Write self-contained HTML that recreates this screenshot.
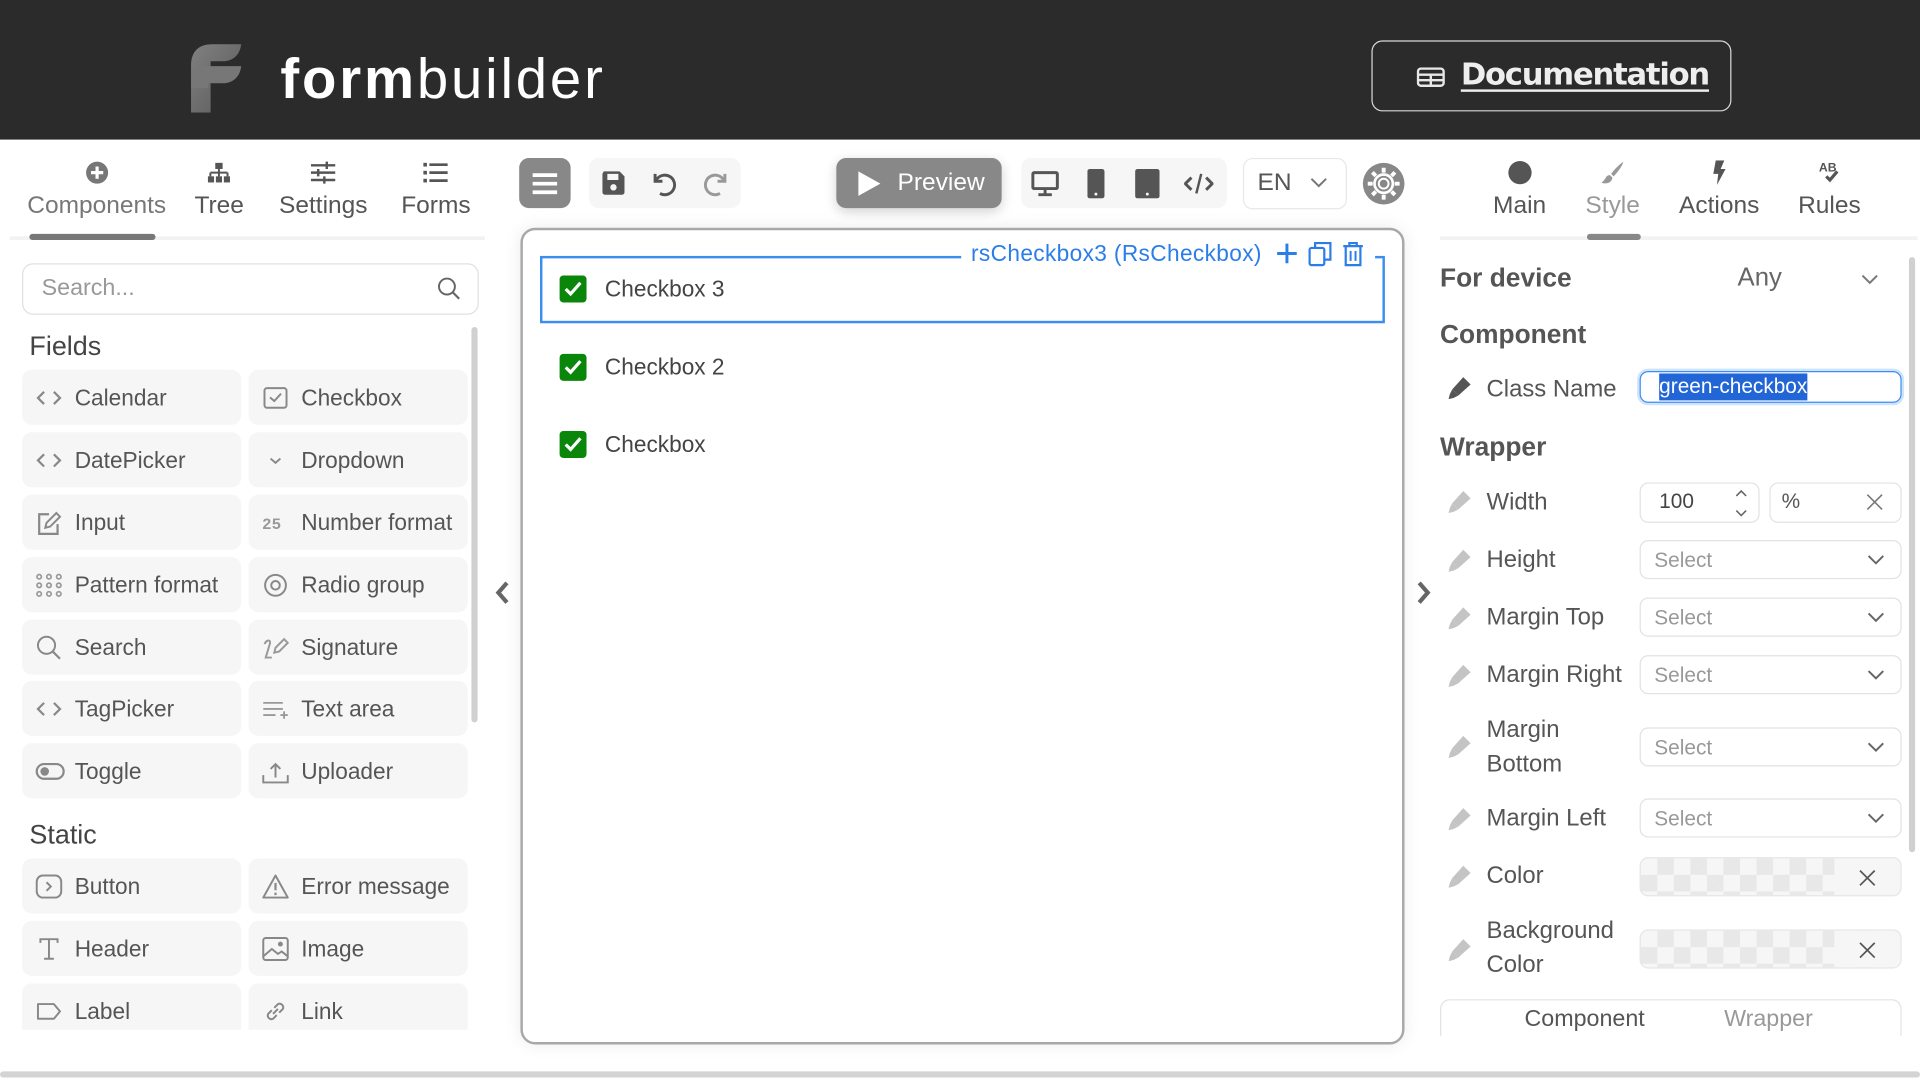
<!DOCTYPE html>
<html><head><meta charset="utf-8">
<style>
*{box-sizing:border-box;margin:0;padding:0}
html,body{width:1920px;height:1080px;overflow:hidden;background:#fff;font-family:"Liberation Sans",sans-serif}
#w{position:absolute;left:0;top:0;width:1568px;height:882px;transform:scale(1.22449);transform-origin:0 0;color:#555}
.a{position:absolute}
.hdr{left:0;top:0;width:1568px;height:114px;background:#2b2b2b}
.t{position:absolute;white-space:nowrap}
.tab{position:absolute;top:131px;text-align:center;font-size:20px;color:#555;transform:translateX(-50%)}
.tab svg{display:block;margin:0 auto 6px}
.item{position:absolute;width:179px;height:45px;background:#f6f6f6;border-radius:8px;font-size:18.5px;color:#555}
.item span{position:absolute;left:43px;top:12px}
.item svg{position:absolute;left:11px;top:12px}
.grp{position:absolute;background:#f6f6f6;border-radius:8px}
.lbl{position:absolute;left:1214px;font-size:19.5px;color:#555;line-height:28px}
.pen{position:absolute;left:1182px}
.sel{position:absolute;left:1339px;width:214px;height:32px;border:1px solid #e2e2e2;border-radius:7px;font-size:17px;color:#999}
.sel span{position:absolute;left:11px;top:6px}
.sel svg{position:absolute;right:12px;top:10px}
.chk{position:absolute;left:457px;width:22px;height:22px;background:#0a870a;border-radius:3px}
.chk svg{position:absolute;left:3px;top:4px}
.ct{position:absolute;left:494px;font-size:18.5px;color:#444}
.checker{position:absolute;left:1339px;width:214px;height:32px;border:1px solid #e6e6e6;border-radius:7px;background-color:#f6f6f6;background-image:linear-gradient(45deg,#e8e8e8 25%,transparent 25%,transparent 75%,#e8e8e8 75%),linear-gradient(45deg,#e8e8e8 25%,transparent 25%,transparent 75%,#e8e8e8 75%);background-size:27px 27px;background-position:0 0,13.5px 13.5px;overflow:hidden}
.checker i{position:absolute;right:0;top:0;width:54px;height:100%;background:#f6f6f6}
.checker svg{position:absolute;right:20px;top:9px}
</style></head><body><div id="w">
<div class="a hdr"></div>
<svg class="a" style="left:156px;top:36px" width="42" height="56" viewBox="0 0 42 56">
<defs><linearGradient id="g" x1="0" y1="0" x2="1" y2="1"><stop offset="0" stop-color="#808080"/><stop offset="1" stop-color="#5a5a5a"/></linearGradient></defs>
<path d="M0 56V18C0 6 6 0 18 0H41C40 9 34 14 26 14H16V56Z" fill="url(#g)"/>
<path d="M0 36V30C0 22 5 18 13 18H41C40 27 34 32 26 32H14V36Z" fill="#777"/>
</svg>
<div class="t" style="left:229px;top:37px;font-size:46px;color:#fff;letter-spacing:2.3px"><b>form</b>builder</div>
<div class="a" style="left:1120px;top:33px;width:294px;height:58px;border:1px solid #d8d8d8;border-radius:9px"></div>
<svg class="a" style="left:1157px;top:55px" width="23" height="16" viewBox="0 0 23 16"><rect x="1" y="1" width="21" height="14" rx="2.5" fill="none" stroke="#e8e8e8" stroke-width="2"/><path d="M1 6H22M1 10.5H22M11.5 6V15" stroke="#e8e8e8" stroke-width="2"/></svg>
<div class="t" style="left:1193px;top:46px;font-size:25px;font-weight:bold;color:#eee;text-decoration:underline;text-underline-offset:4px;font-family:'DejaVu Sans','Liberation Sans',sans-serif;letter-spacing:-1px">Documentation</div>

<!-- left tabs -->
<div class="tab" style="left:79px;color:#777"><svg width="20" height="20" viewBox="0 0 20 20"><circle cx="10" cy="10" r="9" fill="#777"/><path d="M10 5V15M5 10H15" stroke="#fff" stroke-width="2.6"/></svg>Components</div>
<div class="tab" style="left:179px"><svg width="20" height="20" viewBox="0 0 20 20"><rect x="7" y="2" width="6" height="5" fill="#555"/><path d="M10 7V10M3 10H17M3 10V13M10 10V13M17 10V13" stroke="#555" stroke-width="1.6" fill="none"/><rect x="1" y="13" width="5" height="5" fill="#555"/><rect x="7.5" y="13" width="5" height="5" fill="#555"/><rect x="14" y="13" width="5" height="5" fill="#555"/></svg>Tree</div>
<div class="tab" style="left:264px"><svg width="20" height="20" viewBox="0 0 20 20"><path d="M0 4H20M0 10H20M0 16H20" stroke="#555" stroke-width="2"/><path d="M13 1V7M6 7V13M11 13V19" stroke="#555" stroke-width="2"/></svg>Settings</div>
<div class="tab" style="left:356px"><svg width="20" height="20" viewBox="0 0 20 20"><rect x="0" y="2" width="3" height="3" fill="#555"/><rect x="0" y="8.5" width="3" height="3" fill="#555"/><rect x="0" y="15" width="3" height="3" fill="#555"/><path d="M5 3.5H20M5 10H20M5 16.5H20" stroke="#555" stroke-width="2.2"/></svg>Forms</div>
<div class="a" style="left:8px;top:193px;width:388px;height:3px;background:#f2f2f2"></div>
<div class="a" style="left:24px;top:191px;width:103px;height:5px;background:#777;border-radius:3px"></div>
<div class="a" style="left:18px;top:215px;width:373px;height:42px;border:1px solid #e0e0e0;border-radius:9px"></div>
<div class="t" style="left:34px;top:225px;font-size:19px;color:#999">Search...</div>
<svg class="a" style="left:357px;top:226px" width="20" height="20" viewBox="0 0 20 20"><circle cx="8" cy="8" r="6.5" fill="none" stroke="#666" stroke-width="1.6"/><path d="M12.8 12.8L18 18" stroke="#666" stroke-width="1.8"/></svg>
<div class="t" style="left:24px;top:270px;font-size:22px;color:#444">Fields</div>
<div class="a" style="left:385px;top:267px;width:5px;height:323px;background:#d0d0d0;border-radius:3px"></div>

<div class="item" style="left:18px;top:302px"><svg width="22" height="22" viewBox="0 0 22 22"><path d="M7 6L2 11L7 16M15 6L20 11L15 16" fill="none" stroke="#888" stroke-width="1.8"/></svg><span>Calendar</span></div>
<div class="item" style="left:203px;top:302px"><svg width="22" height="22" viewBox="0 0 22 22"><rect x="2" y="3" width="18" height="16" rx="2" fill="none" stroke="#888" stroke-width="1.6"/><path d="M6.5 10.5L10 13.5L15.5 7.5" fill="none" stroke="#888" stroke-width="1.6"/></svg><span>Checkbox</span></div>
<div class="item" style="left:18px;top:353px"><svg width="22" height="22" viewBox="0 0 22 22"><path d="M7 6L2 11L7 16M15 6L20 11L15 16" fill="none" stroke="#888" stroke-width="1.8"/></svg><span>DatePicker</span></div>
<div class="item" style="left:203px;top:353px"><svg width="22" height="22" viewBox="0 0 22 22"><path d="M7 9.5L11 13L15 9.5" fill="none" stroke="#888" stroke-width="1.6"/></svg><span>Dropdown</span></div>
<div class="item" style="left:18px;top:404px"><svg width="22" height="22" viewBox="0 0 22 22"><path d="M11 4H3V20H18V12" fill="none" stroke="#888" stroke-width="1.8"/><path d="M8 15L9 11L17 3L20 6L12 14Z" fill="none" stroke="#888" stroke-width="1.6"/></svg><span>Input</span></div>
<div class="item" style="left:203px;top:404px"><svg width="22" height="22" viewBox="0 0 22 22"><text x="0" y="16" font-size="13" font-weight="bold" fill="#999" font-family="Liberation Mono,monospace">25</text></svg><span>Number format</span></div>
<div class="item" style="left:18px;top:455px"><svg width="22" height="22" viewBox="0 0 22 22"><g fill="none" stroke="#999" stroke-width="1.4"><circle cx="3" cy="4" r="1.8"/><circle cx="11" cy="4" r="1.8"/><circle cx="19" cy="4" r="1.8"/><circle cx="3" cy="11" r="1.8"/><circle cx="11" cy="11" r="1.8"/><circle cx="19" cy="11" r="1.8"/><circle cx="3" cy="18" r="1.8"/><circle cx="11" cy="18" r="1.8"/><circle cx="19" cy="18" r="1.8"/></g></svg><span>Pattern format</span></div>
<div class="item" style="left:203px;top:455px"><svg width="22" height="22" viewBox="0 0 22 22"><circle cx="11" cy="11" r="8.5" fill="none" stroke="#888" stroke-width="1.6"/><circle cx="11" cy="11" r="3.5" fill="none" stroke="#888" stroke-width="1.6"/></svg><span>Radio group</span></div>
<div class="item" style="left:18px;top:506px"><svg width="22" height="22" viewBox="0 0 22 22"><circle cx="9" cy="9" r="7" fill="none" stroke="#888" stroke-width="1.6"/><path d="M14 14L20 20" stroke="#888" stroke-width="1.8"/></svg><span>Search</span></div>
<div class="item" style="left:203px;top:506px"><svg width="22" height="22" viewBox="0 0 22 22"><path d="M2 8C4 4 8 4 6 9L3 19H8M10 15L11 11L18 4L21 7L14 14Z" fill="none" stroke="#999" stroke-width="1.6"/></svg><span>Signature</span></div>
<div class="item" style="left:18px;top:556px"><svg width="22" height="22" viewBox="0 0 22 22"><path d="M7 6L2 11L7 16M15 6L20 11L15 16" fill="none" stroke="#888" stroke-width="1.8"/></svg><span>TagPicker</span></div>
<div class="item" style="left:203px;top:556px"><svg width="22" height="22" viewBox="0 0 22 22"><path d="M1 6H17M1 11H17M1 16H11M15 16H21M18 13V19" stroke="#999" stroke-width="1.5"/></svg><span>Text area</span></div>
<div class="item" style="left:18px;top:607px"><svg width="24" height="22" viewBox="0 0 24 22"><rect x="1" y="5" width="22" height="12" rx="6" fill="none" stroke="#888" stroke-width="1.8"/><circle cx="7.5" cy="11" r="3.5" fill="#888"/></svg><span>Toggle</span></div>
<div class="item" style="left:203px;top:607px"><svg width="22" height="22" viewBox="0 0 22 22"><path d="M1 14V20H21V14M11 16V5M7 9L11 5L15 9" fill="none" stroke="#888" stroke-width="1.6"/></svg><span>Uploader</span></div>

<div class="t" style="left:24px;top:669px;font-size:22px;color:#444">Static</div>
<div class="item" style="left:18px;top:701px"><svg width="22" height="22" viewBox="0 0 22 22"><rect x="1" y="2" width="20" height="18" rx="5" fill="none" stroke="#888" stroke-width="1.6"/><path d="M9 7.5L12.5 11L9 14.5" fill="none" stroke="#888" stroke-width="1.6"/></svg><span>Button</span></div>
<div class="item" style="left:203px;top:701px"><svg width="22" height="22" viewBox="0 0 22 22"><path d="M11 2L21 20H1Z" fill="none" stroke="#888" stroke-width="1.6" stroke-linejoin="round"/><path d="M11 8V14M11 16V18" stroke="#888" stroke-width="1.8"/></svg><span>Error message</span></div>
<div class="item" style="left:18px;top:752px"><svg width="22" height="22" viewBox="0 0 22 22"><path d="M4 6V3H18V6M11 3V19M7 19H15" fill="none" stroke="#888" stroke-width="1.6"/></svg><span>Header</span></div>
<div class="item" style="left:203px;top:752px"><svg width="22" height="22" viewBox="0 0 22 22"><rect x="1" y="2" width="20" height="18" rx="2" fill="none" stroke="#888" stroke-width="1.6"/><path d="M1 17L8 11L13 15L16 13L21 17" fill="none" stroke="#888" stroke-width="1.6"/><circle cx="15" cy="7" r="2" fill="#888"/></svg><span>Image</span></div>
<div class="a" style="left:0;top:803px;width:400px;height:38px;overflow:hidden">
<div class="item" style="left:18px;top:0"><svg width="22" height="22" viewBox="0 0 22 22"><path d="M2 5H15L20 11L15 17H2Z" fill="none" stroke="#888" stroke-width="1.6" stroke-linejoin="round"/></svg><span>Label</span></div>
<div class="item" style="left:203px;top:0"><svg width="22" height="22" viewBox="0 0 22 22"><path d="M9 13L13 9M8 10L5 13A3 3 0 0 0 9 17L12 14M10 8L13 5A3 3 0 0 1 17 9L14 12" fill="none" stroke="#888" stroke-width="1.6"/></svg><span>Link</span></div>
</div>

<!-- toolbar -->
<div class="grp" style="left:424px;top:129px;width:42px;height:41px;background:#888"></div>
<svg class="a" style="left:434px;top:140px" width="22" height="20" viewBox="0 0 22 20"><path d="M1 3H21M1 10H21M1 17H21" stroke="#fff" stroke-width="3"/></svg>
<div class="grp" style="left:481px;top:129px;width:124px;height:41px"></div>
<svg class="a" style="left:491px;top:139px" width="20" height="21" viewBox="0 0 20 21"><path d="M2 1H15L19 5V18A2 2 0 0 1 17 20H3A2 2 0 0 1 1 18V3Z" fill="#555"/><rect x="5" y="3" width="9" height="5" fill="#f6f6f6"/><circle cx="10" cy="14" r="2.6" fill="#f6f6f6"/></svg>
<svg class="a" style="left:530px;top:138px" width="24" height="24" viewBox="0 0 24 24"><path d="M5 4V10H11" fill="none" stroke="#555" stroke-width="2.4"/><path d="M5.5 10A8 8 0 1 1 9 20" fill="none" stroke="#555" stroke-width="2.4"/></svg>
<svg class="a" style="left:573px;top:138px" width="24" height="24" viewBox="0 0 24 24"><path d="M19 4V10H13" fill="none" stroke="#999" stroke-width="2.4"/><path d="M18.5 10A8 8 0 1 0 15 20" fill="none" stroke="#999" stroke-width="2.4"/></svg>
<div class="grp" style="left:683px;top:129px;width:135px;height:41px;background:#888;box-shadow:0 3px 10px rgba(0,0,0,.18)"></div>
<svg class="a" style="left:700px;top:139px" width="20" height="22" viewBox="0 0 20 22"><path d="M1 1L19 11L1 21Z" fill="#fff"/></svg>
<div class="t" style="left:733px;top:138px;font-size:20px;color:#fff">Preview</div>
<div class="grp" style="left:834px;top:129px;width:168px;height:41px"></div>
<svg class="a" style="left:842px;top:139px" width="23" height="22" viewBox="0 0 23 22"><rect x="1.5" y="2" width="20" height="13" rx="1" fill="none" stroke="#555" stroke-width="2.4"/><path d="M11.5 15V19M6 20H17" stroke="#555" stroke-width="2.4"/></svg>
<svg class="a" style="left:888px;top:138px" width="14" height="24" viewBox="0 0 14 24"><rect x="0" y="0" width="14" height="24" rx="2" fill="#555"/><circle cx="7" cy="20.5" r="1.2" fill="#f6f6f6"/></svg>
<svg class="a" style="left:927px;top:138px" width="20" height="24" viewBox="0 0 20 24"><rect x="0" y="0" width="20" height="24" rx="2" fill="#555"/><circle cx="10" cy="20.5" r="1.2" fill="#f6f6f6"/></svg>
<svg class="a" style="left:967px;top:140px" width="24" height="20" viewBox="0 0 24 20"><path d="M6 5L1 10L6 15M18 5L23 10L18 15" fill="none" stroke="#555" stroke-width="2.4"/><path d="M14 2L10 18" stroke="#555" stroke-width="2"/></svg>
<div class="a" style="left:1015px;top:129px;width:85px;height:42px;border:1px solid #e8e8e8;border-radius:8px"></div>
<div class="t" style="left:1027px;top:138px;font-size:20px;color:#555">EN</div>
<svg class="a" style="left:1069px;top:144px" width="16" height="10" viewBox="0 0 16 10"><path d="M2 2L8 8L14 2" fill="none" stroke="#777" stroke-width="1.6"/></svg>
<svg class="a" style="left:1112px;top:132px" width="36" height="36" viewBox="0 0 36 36"><circle cx="18" cy="18" r="17" fill="#888"/><g transform="translate(18 18)"><circle r="7.5" fill="none" stroke="#fff" stroke-width="2.2"/><g stroke="#fff" stroke-width="3.2"><path d="M0 -13V-9M0 13V9M-13 0H-9M13 0H9M-9.2 -9.2L-6.4 -6.4M9.2 9.2L6.4 6.4M-9.2 9.2L-6.4 6.4M9.2 -9.2L6.4 -6.4"/></g><circle r="4" fill="none" stroke="#fff" stroke-width="1.6"/></g></svg>

<!-- canvas -->
<div class="a" style="left:425px;top:186px;width:722px;height:667px;border:2px solid #a8a8a8;border-radius:12px;box-shadow:0 0 14px rgba(0,0,0,.08)"></div>
<div class="a" style="left:441px;top:209px;width:690px;height:55px;border:2px solid #3a8ef0"></div>
<div class="a" style="left:785px;top:195px;width:338px;height:24px;background:#fff"></div>
<div class="t" style="left:793px;top:196px;font-size:18.5px;color:#2b7de8;letter-spacing:0.3px">rsCheckbox3 (RsCheckbox)</div>
<svg class="a" style="left:1042px;top:198px" width="18" height="18" viewBox="0 0 18 18"><path d="M9 1V17M1 9H17" stroke="#2b7de8" stroke-width="2.4"/></svg>
<svg class="a" style="left:1068px;top:197px" width="20" height="21" viewBox="0 0 20 21"><rect x="1.5" y="5.5" width="12" height="14" rx="1.5" fill="none" stroke="#2b7de8" stroke-width="1.8"/><path d="M6 5V1.5H18.5V15H14" fill="none" stroke="#2b7de8" stroke-width="1.8"/></svg>
<svg class="a" style="left:1096px;top:197px" width="18" height="21" viewBox="0 0 18 21"><path d="M1 4H17M6 4V1.5H12V4" fill="none" stroke="#2b7de8" stroke-width="1.8"/><path d="M3 4V19.5H15V4" fill="none" stroke="#2b7de8" stroke-width="1.8"/><path d="M7 8V16M11 8V16" stroke="#2b7de8" stroke-width="1.6"/></svg>
<div class="chk" style="top:225px"><svg width="16" height="14" viewBox="0 0 16 14"><path d="M2 7L6 11L14 2" fill="none" stroke="#fff" stroke-width="2.6"/></svg></div>
<div class="ct" style="top:225px">Checkbox 3</div>
<div class="chk" style="top:289px"><svg width="16" height="14" viewBox="0 0 16 14"><path d="M2 7L6 11L14 2" fill="none" stroke="#fff" stroke-width="2.6"/></svg></div>
<div class="ct" style="top:289px">Checkbox 2</div>
<div class="chk" style="top:352px"><svg width="16" height="14" viewBox="0 0 16 14"><path d="M2 7L6 11L14 2" fill="none" stroke="#fff" stroke-width="2.6"/></svg></div>
<div class="ct" style="top:352px">Checkbox</div>
<svg class="a" style="left:403px;top:474px" width="14" height="20" viewBox="0 0 14 20"><path d="M11 2L4 10L11 18" fill="none" stroke="#666" stroke-width="3.4"/></svg>
<svg class="a" style="left:1156px;top:474px" width="14" height="20" viewBox="0 0 14 20"><path d="M3 2L10 10L3 18" fill="none" stroke="#666" stroke-width="3.4"/></svg>

<!-- right tabs -->
<div class="tab" style="left:1241px"><svg width="20" height="20" viewBox="0 0 20 20"><circle cx="10" cy="10" r="9.5" fill="#555"/></svg>Main</div>
<div class="tab" style="left:1317px;color:#999"><svg width="20" height="20" viewBox="0 0 20 20"><path d="M19 1C16 3 11 8 9 11L11 13C14 10 18 5 19 1Z" fill="#999"/><path d="M8 12C4 12 5 16 1 18C5 20 10 18 10 14Z" fill="#999"/></svg>Style</div>
<div class="tab" style="left:1404px"><svg width="20" height="20" viewBox="0 0 20 20"><path d="M7 0H14L11 7H15L8 20L9 11H5Z" fill="#555"/></svg>Actions</div>
<div class="tab" style="left:1494px"><svg width="22" height="20" viewBox="0 0 22 20"><text x="2" y="9" font-size="10" font-weight="bold" fill="#555" font-family="Liberation Sans,sans-serif">AB</text><path d="M8 13L11 16L17 9" fill="none" stroke="#555" stroke-width="2.6"/></svg>Rules</div>
<div class="a" style="left:1176px;top:193px;width:390px;height:3px;background:#f2f2f2"></div>
<div class="a" style="left:1296px;top:191px;width:44px;height:5px;background:#888;border-radius:3px"></div>
<div class="a" style="left:1559px;top:210px;width:5px;height:486px;background:#d0d0d0;border-radius:3px"></div>

<div class="t" style="left:1176px;top:215px;font-size:21.5px;font-weight:bold;color:#555">For device</div>
<div class="t" style="left:1419px;top:215px;font-size:21px;color:#666">Any</div>
<svg class="a" style="left:1519px;top:223px" width="16" height="10" viewBox="0 0 16 10"><path d="M2 2L8 8L14 2" fill="none" stroke="#777" stroke-width="1.6"/></svg>
<div class="t" style="left:1176px;top:261px;font-size:21.5px;font-weight:bold;color:#555">Component</div>
<svg class="pen" style="top:307px" width="20" height="20" viewBox="0 0 20 20"><path d="M13 1L19 7L9 16L4 11Z" fill="#555"/><path d="M4 11L9 16L5 18L1 19L2 15Z" fill="#555"/></svg>
<div class="lbl" style="top:304px">Class Name</div>
<div class="a" style="left:1337px;top:301px;width:218px;height:30px;border:2px solid #cfe3fb;border-radius:9px"></div>
<div class="a" style="left:1339px;top:303px;width:214px;height:26px;border:1px solid #3a8ef0;border-radius:7px"></div>
<div class="t" style="left:1355px;top:305px;font-size:17px;color:#fff;background:#2265d6;line-height:22px">green-checkbox</div>
<div class="t" style="left:1176px;top:353px;font-size:21.5px;font-weight:bold;color:#555">Wrapper</div>

<svg class="pen" style="top:400px" width="20" height="20" viewBox="0 0 20 20"><path d="M13 1L19 7L9 16L4 11Z" fill="#c4c4c4"/><path d="M4 11L9 16L5 18L1 19L2 15Z" fill="#c4c4c4"/></svg>
<div class="lbl" style="top:396px">Width</div>
<div class="a" style="left:1339px;top:394px;width:98px;height:33px;border:1px solid #e2e2e2;border-radius:7px"></div>
<div class="t" style="left:1355px;top:400px;font-size:17px;color:#444">100</div>
<svg class="a" style="left:1416px;top:399px" width="12" height="24" viewBox="0 0 12 24"><path d="M2 6L6 2L10 6M2 18L6 22L10 18" fill="none" stroke="#666" stroke-width="1.3"/></svg>
<div class="a" style="left:1445px;top:394px;width:108px;height:33px;border:1px solid #e2e2e2;border-radius:7px"></div>
<div class="t" style="left:1455px;top:400px;font-size:17px;color:#555">%</div>
<svg class="a" style="left:1524px;top:403px" width="14" height="14" viewBox="0 0 14 14"><path d="M1 1L13 13M13 1L1 13" stroke="#777" stroke-width="1.3"/></svg>

<svg class="pen" style="top:448px" width="20" height="20" viewBox="0 0 20 20"><path d="M13 1L19 7L9 16L4 11Z" fill="#c4c4c4"/><path d="M4 11L9 16L5 18L1 19L2 15Z" fill="#c4c4c4"/></svg>
<div class="lbl" style="top:443px">Height</div>
<div class="sel" style="top:441px"><span>Select</span><svg width="16" height="10" viewBox="0 0 16 10"><path d="M2 2L8 8L14 2" fill="none" stroke="#666" stroke-width="1.6"/></svg></div>
<svg class="pen" style="top:495px" width="20" height="20" viewBox="0 0 20 20"><path d="M13 1L19 7L9 16L4 11Z" fill="#c4c4c4"/><path d="M4 11L9 16L5 18L1 19L2 15Z" fill="#c4c4c4"/></svg>
<div class="lbl" style="top:490px">Margin Top</div>
<div class="sel" style="top:488px"><span>Select</span><svg width="16" height="10" viewBox="0 0 16 10"><path d="M2 2L8 8L14 2" fill="none" stroke="#666" stroke-width="1.6"/></svg></div>
<svg class="pen" style="top:542px" width="20" height="20" viewBox="0 0 20 20"><path d="M13 1L19 7L9 16L4 11Z" fill="#c4c4c4"/><path d="M4 11L9 16L5 18L1 19L2 15Z" fill="#c4c4c4"/></svg>
<div class="lbl" style="top:537px">Margin Right</div>
<div class="sel" style="top:535px"><span>Select</span><svg width="16" height="10" viewBox="0 0 16 10"><path d="M2 2L8 8L14 2" fill="none" stroke="#666" stroke-width="1.6"/></svg></div>
<svg class="pen" style="top:600px" width="20" height="20" viewBox="0 0 20 20"><path d="M13 1L19 7L9 16L4 11Z" fill="#c4c4c4"/><path d="M4 11L9 16L5 18L1 19L2 15Z" fill="#c4c4c4"/></svg>
<div class="lbl" style="top:582px">Margin<br>Bottom</div>
<div class="sel" style="top:594px"><span>Select</span><svg width="16" height="10" viewBox="0 0 16 10"><path d="M2 2L8 8L14 2" fill="none" stroke="#666" stroke-width="1.6"/></svg></div>
<svg class="pen" style="top:659px" width="20" height="20" viewBox="0 0 20 20"><path d="M13 1L19 7L9 16L4 11Z" fill="#c4c4c4"/><path d="M4 11L9 16L5 18L1 19L2 15Z" fill="#c4c4c4"/></svg>
<div class="lbl" style="top:654px">Margin Left</div>
<div class="sel" style="top:652px"><span>Select</span><svg width="16" height="10" viewBox="0 0 16 10"><path d="M2 2L8 8L14 2" fill="none" stroke="#666" stroke-width="1.6"/></svg></div>
<svg class="pen" style="top:706px" width="20" height="20" viewBox="0 0 20 20"><path d="M13 1L19 7L9 16L4 11Z" fill="#c4c4c4"/><path d="M4 11L9 16L5 18L1 19L2 15Z" fill="#c4c4c4"/></svg>
<div class="lbl" style="top:701px">Color</div>
<div class="checker" style="top:700px"><i></i><svg width="14" height="14" viewBox="0 0 14 14"><path d="M1 1L13 13M13 1L1 13" stroke="#555" stroke-width="1.4"/></svg></div>
<svg class="pen" style="top:766px" width="20" height="20" viewBox="0 0 20 20"><path d="M13 1L19 7L9 16L4 11Z" fill="#c4c4c4"/><path d="M4 11L9 16L5 18L1 19L2 15Z" fill="#c4c4c4"/></svg>
<div class="lbl" style="top:746px">Background<br>Color</div>
<div class="checker" style="top:759px"><i></i><svg width="14" height="14" viewBox="0 0 14 14"><path d="M1 1L13 13M13 1L1 13" stroke="#555" stroke-width="1.4"/></svg></div>
<div class="a" style="left:1176px;top:816px;width:377px;height:40px;border:1px solid #e2e2e2;border-radius:8px;border-bottom:none"></div>
<div class="a" style="left:1170px;top:846px;width:398px;height:30px;background:#fff"></div>
<div class="t" style="left:1245px;top:822px;font-size:19px;color:#555">Component</div>
<div class="t" style="left:1408px;top:822px;font-size:19px;color:#999">Wrapper</div>
<div class="a" style="left:0;top:875px;width:1568px;height:5px;background:#d4d4d4;border-radius:3px"></div>
</div></body></html>
